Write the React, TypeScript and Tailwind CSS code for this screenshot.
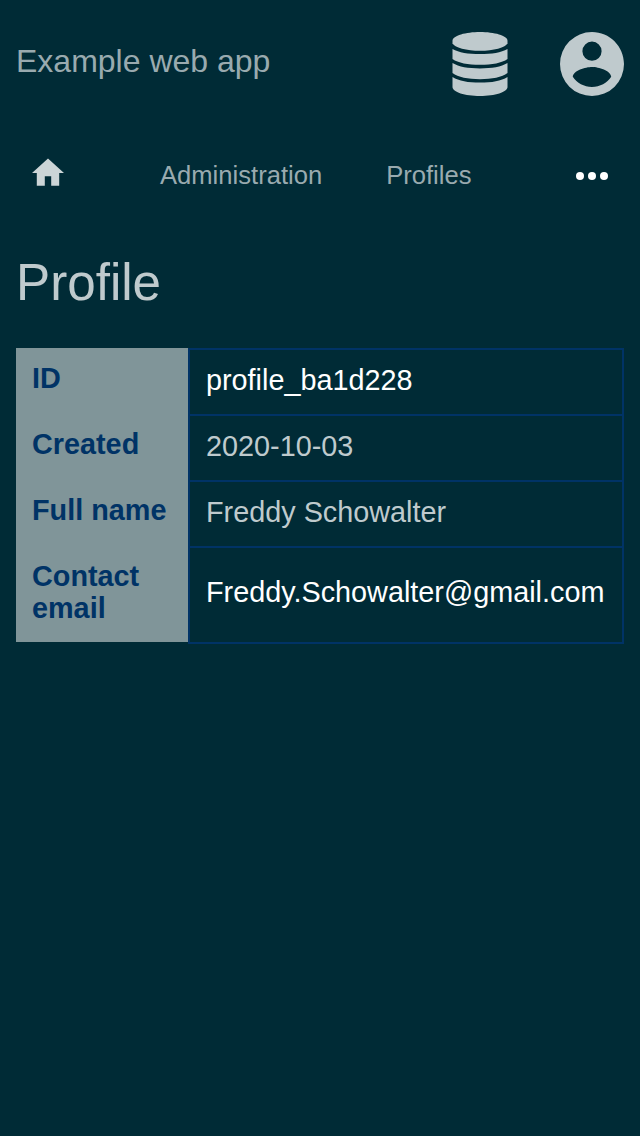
import React from 'react';

const rows = [
  { label: 'ID', value: 'profile_ba1d228', link: true },
  { label: 'Created', value: '2020-10-03', link: false },
  { label: 'Full name', value: 'Freddy Schowalter', link: false },
  { label: 'Contact email', value: 'Freddy.Schowalter@gmail.com', link: true },
];

function DatabaseIcon() {
  return (
    <svg viewBox="0 0 64 64" className="size-16 fill-[#bfcacd]">
      <path d="M32 0C46 0 59.5 3.5 59.5 8.7V11.2C58 15.5 45 18.8 32 18.8C19 18.8 6 15.5 4.5 11.2V8.7C4.5 3.5 18 0 32 0Z" />
      <path d="M4.5 17C11 20.7 20 22.1 32 22.1C44 22.1 53 20.7 59.5 17V27C54 31 44 32.8 32 32.8C20 32.8 10 31 4.5 27Z" />
      <path d="M4.5 31C11 34.9 20 36.4 32 36.4C44 36.4 53 34.9 59.5 31V41C54 45.2 44 47.2 32 47.2C20 47.2 10 45.2 4.5 41Z" />
      <path d="M4.5 45C11 49 20 50.6 32 50.6C44 50.6 53 49 59.5 45V55C59.5 60 47 64 32 64C17 64 4.5 60 4.5 55Z" />
    </svg>
  );
}

function AccountIcon() {
  return (
    <svg viewBox="2 2 20 20" className="size-16 fill-[#bfcacd]">
      <path d="M12 19.2C9.5 19.2 7.29 17.92 6 16C6.03 14 10 12.9 12 12.9C14 12.9 17.97 14 18 16C16.71 17.92 14.5 19.2 12 19.2M12 5A3 3 0 0 1 15 8A3 3 0 0 1 12 11A3 3 0 0 1 9 8A3 3 0 0 1 12 5M12 2A10 10 0 0 0 2 12A10 10 0 0 0 12 22A10 10 0 0 0 22 12C22 6.47 17.5 2 12 2Z" />
    </svg>
  );
}

export default function App() {
  return (
    <div className="min-h-[1136px] bg-[#002b36] font-['Liberation_Sans',sans-serif]">
      <header className="flex h-32 items-start justify-between px-4 pt-8">
        <div className="mt-[5px] text-[32px] leading-[48px] text-[#99aaaf]">Example web app</div>
        <div className="flex gap-12">
          <DatabaseIcon />
          <AccountIcon />
        </div>
      </header>
      <nav className="flex h-24 items-center px-8 text-[25.6px] leading-9 text-[#99aaaf]">
        <svg viewBox="2 2.65 20 17.5" className="-mt-2 h-7 w-8 fill-[#ccd5d7]">
          <path d="M10 20v-6h4v6h5v-8h3L12 3 2 12h3v8z" />
        </svg>
        <span className="-mt-0.5 ml-24">Administration</span>
        <span className="-mt-0.5 ml-16">Profiles</span>
        <svg viewBox="0 0 32 8" className="ml-auto h-2 w-8 fill-white">
          <circle cx="4" cy="4" r="4" />
          <circle cx="16" cy="4" r="4" />
          <circle cx="28" cy="4" r="4" />
        </svg>
      </nav>
      <main className="px-4 pt-[29px]">
        <h1 className="text-[51.2px] leading-[60px] text-[#bfcacd]">Profile</h1>
        <dl className="mt-[35px] text-[28.8px] leading-8">
          {rows.map((row) => (
            <div key={row.label} className="group flex">
              <dt className="w-[172px] shrink-0 bg-[#809599] px-4 pt-[14px] pb-[18px] font-bold text-[#003366] group-last:mb-0.5">
                {row.label}
              </dt>
              <dd
                className={
                  row.link
                    ? 'flex min-h-[66px] flex-1 items-center border-2 border-b-0 border-[#003366] px-4 pb-1 text-white group-last:border-b-2 group-last:pb-1.5'
                    : 'flex min-h-[66px] flex-1 items-center border-2 border-b-0 border-[#003366] px-4 pb-1 text-[#bfcacd]'
                }
              >
                {row.value}
              </dd>
            </div>
          ))}
        </dl>
      </main>
    </div>
  );
}
